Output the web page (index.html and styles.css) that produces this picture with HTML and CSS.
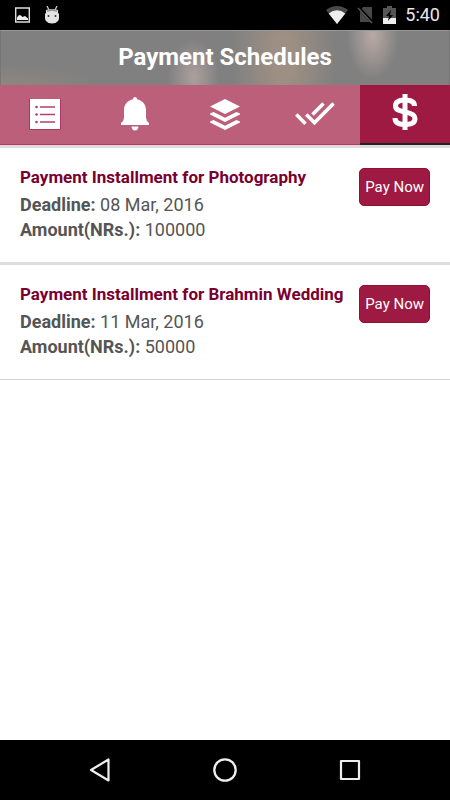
FILE: index.html
```html
<!DOCTYPE html>
<html lang="en">
<head>
<meta charset="utf-8">
<meta name="viewport" content="width=device-width, initial-scale=1">
<title>Payment Schedules</title>
<link rel="stylesheet" href="styles.css">
</head>
<body>
<div class="status">
  <div class="status-group">
    <svg width="15" height="16" viewBox="0 0 15 16"><path d="M.7 1h13.6v14H.7z" fill="none" stroke="#ddd" stroke-width="1.4"/><path d="M2 13v-2.500l2-2.500 2 .6 1.500 1.400 2.500-1 3 2.500V13z" fill="#eee"/></svg>
    <svg width="16" height="18" viewBox="0 0 16 18"><path d="M3 0l2 4M13 0l-2 4" stroke="#ccc" stroke-width="1.300"/><path d="M2 4q6-2 12 0v3q1 0 1 2v3q0 2-1 3-2 2.500-6 2.500T2 15q-1-1-1-3V9q0-2 1-2z" fill="#e4e4e4"/><path d="M3 5q5-2 10 0" fill="none" stroke="#999" stroke-width="2"/><circle cx="4.500" cy="10" r="1" fill="#333"/><circle cx="11.500" cy="10" r="1" fill="#333"/></svg>
  </div>
  <div class="status-group status-right">
    <svg width="22" height="18" viewBox="0 0 22 18"><path d="M0 4Q11-4 22 4L11 18z" fill="#484848"/><path d="M2.700 7.500Q11 1 19.300 7.500L11 18z" fill="#eee"/></svg>
    <svg width="17" height="18" viewBox="0 0 17 18"><path d="M6 1h9v15H3V5z" fill="#484848"/><path d="M1 1l15 16" stroke="#000" stroke-width="3"/><path d="M1 2l14 15" stroke="#555" stroke-width="1.500"/></svg>
    <svg width="13" height="18" viewBox="0 0 13 18"><path d="M0 2h4V0h5v2h4v10H0z" fill="#555"/><path d="M0 12h13v6H0z" fill="#eee"/><path d="M8 4L3 10h3l-1 5 5-6H7z" fill="#000"/></svg>
    <span class="clock">5:40</span>
  </div>
</div>
<header class="header"><h1>Payment Schedules</h1></header>
<nav class="tabs">
  <a class="tab" href="#tasks" aria-label="Tasks"><svg width="32" height="32" viewBox="0 0 32 32"><path d="M1 1h30v30H1z" fill="#fff"/><path d="M.5 1v30.500h31V1" fill="none" stroke="#ad3762" stroke-width="1"/><path d="M11 9h15M11 16.500h15M11 24h15" stroke="#b4406b" stroke-width="1.300"/><g fill="#b4406b"><circle cx="7.500" cy="9" r="1.300"/><circle cx="7.500" cy="16.500" r="1.300"/><circle cx="7.500" cy="24" r="1.300"/></g></svg></a>
  <a class="tab" href="#alerts" aria-label="Notifications"><svg width="28" height="34" viewBox="0 0 28 34" fill="#fff"><path d="M14 0q2 0 2 2.200C21.500 3.300 25 7.500 25 13v8q0 2.500 3 5v2H0v-2q3-2.500 3-5v-8C3 7.500 6.500 3.300 12 2.200Q12 0 14 0zM10.500 29.500h7q-.5 4-3.500 4t-3.500-4z"/></svg></a>
  <a class="tab" href="#packages" aria-label="Packages"><svg width="30" height="32" viewBox="0 0 30 32" fill="#fff"><path d="M15 1l15 7.500-15 7.500L0 8.500zM0 15.500L3.500 14 15 19.700 26.500 14l3.500 1.500v1L15 24 0 16.500zM0 23.500L3.500 22 15 27.700 26.500 22l3.500 1.500v1L15 32 0 24.500z"/></svg></a>
  <a class="tab" href="#done" aria-label="Completed"><svg width="40" height="24" viewBox="0 0 40 24"><path d="M1.300 12.500l9.200 9.200M11.300 12.500l8.200 8.200L38.500 1.500M28.500 1.500L17.500 12.500" fill="none" stroke="#fff" stroke-width="3.600"/></svg></a>
  <a class="tab tab-active" href="#payments" aria-label="Payments" aria-current="page"><svg width="26" height="36" viewBox="0 0 26 36" fill="none" stroke="#fff"><path d="M22.500 12C22.500 8 19 6 13 6S3.500 8 3.500 12c0 4 4 5 9.500 6s10 2.500 10 6.500-4 6-10 6-10-2-10-6.500" stroke-width="5"/><path d="M13 0v36" stroke-width="5"/></svg></a>
</nav>
<main class="schedules">
  <article class="payment">
    <div class="details">
      <h2>Payment Installment for Photography</h2>
      <p><strong>Deadline:</strong> 08 Mar, 2016</p>
      <p><strong>Amount(NRs.):</strong> 100000</p>
    </div>
    <button class="pay" type="button">Pay Now</button>
  </article>
  <article class="payment">
    <div class="details">
      <h2>Payment Installment for Brahmin Wedding</h2>
      <p><strong>Deadline:</strong> 11 Mar, 2016</p>
      <p><strong>Amount(NRs.):</strong> 50000</p>
    </div>
    <button class="pay" type="button">Pay Now</button>
  </article>
</main>
<footer class="system-nav">
  <button type="button" aria-label="Back"><svg width="24" height="26" viewBox="0 0 24 26"><path d="M20.500 2.500v21L3 13z" fill="none" stroke="#eee" stroke-width="2.200" stroke-linejoin="round"/></svg></button>
  <button type="button" aria-label="Home"><svg width="24" height="24" viewBox="0 0 24 24"><circle cx="12" cy="12" r="10.700" fill="none" stroke="#eee" stroke-width="2.300"/></svg></button>
  <button type="button" aria-label="Recent apps"><svg width="22" height="22" viewBox="0 0 22 22"><path d="M2 2h18v18H2z" fill="none" stroke="#eee" stroke-width="2.200" stroke-linejoin="round"/></svg></button>
</footer>
</body>
</html>
```
FILE: styles.css
```css
* {
  box-sizing: border-box;
}

body {
  margin: 0;
  min-height: 100vh;
  display: flex;
  flex-direction: column;
  background: #fff;
  color: #555;
  font-family: Roboto, "Liberation Sans", sans-serif;
}

h1,
h2,
p {
  margin: 0;
}

svg {
  display: block;
}

button {
  border: 0;
  font-family: inherit;
}

.status {
  display: flex;
  justify-content: space-between;
  align-items: center;
  height: 30px;
  padding: 0 10px 0 15px;
  background: #000;
}

.status-group {
  display: flex;
  align-items: center;
  gap: 14px;
}

.status-right {
  gap: 9px;
}

.clock {
  color: #e8e8e8;
  font-size: 18px;
  line-height: 30px;
}

.header {
  height: 55px;
  border: 1px solid #777;
  border-top-color: #999;
  border-bottom: 0;
  background:
    radial-gradient(ellipse 26px 44px at 83% 8%, #b9aaa5, transparent),
    radial-gradient(ellipse 26px 38px at 43% 85%, #aca09d, transparent),
    radial-gradient(ellipse 52px 110px at 63% 50%, #9d8f83 20%, transparent),
    radial-gradient(ellipse 100px 20px at 0 100%, #8f877d, transparent),
    #808080;
}

.header h1 {
  color: #fff;
  font-size: 24px;
  font-weight: 700;
  line-height: 52px;
  text-align: center;
}

.tabs {
  display: grid;
  grid-template-columns: repeat(5, 1fr);
  height: 60px;
}

.tab {
  display: flex;
  align-items: center;
  justify-content: center;
  padding-bottom: 2px;
  border-bottom: 1px solid #b53763;
  background: #bc5f7a;
}

.tab-active {
  padding-bottom: 4px;
  border-bottom: 2px solid #222;
  background: #9e1a42;
}

.schedules {
  flex: 1;
}

.payment {
  display: flex;
  justify-content: space-between;
  align-items: flex-start;
  padding: 17px 20px 20px;
  border-top: 3px solid #dcdcdc;
}

.payment:last-child {
  border-bottom: 1px solid #d4d4d4;
}

.details {
  font-size: 18px;
  line-height: 25px;
}

.details h2 {
  margin-bottom: 2px;
  color: #7a0030;
  font-size: 17px;
  font-weight: 700;
  white-space: nowrap;
}

.details strong {
  font-weight: 700;
}

.pay {
  flex: none;
  margin-top: 3px;
  height: 38px;
  padding: 0 5px;
  border: 1px solid #8f1030;
  border-radius: 5px;
  background: #9e1a42;
  color: #fff;
  font-size: 15px;
}

.system-nav {
  display: flex;
  justify-content: center;
  align-items: center;
  gap: 76px;
  height: 60px;
  background: #000;
}

.system-nav button {
  display: flex;
  align-items: center;
  justify-content: center;
  width: 49px;
  height: 48px;
  padding: 0;
  background: none;
}
```
